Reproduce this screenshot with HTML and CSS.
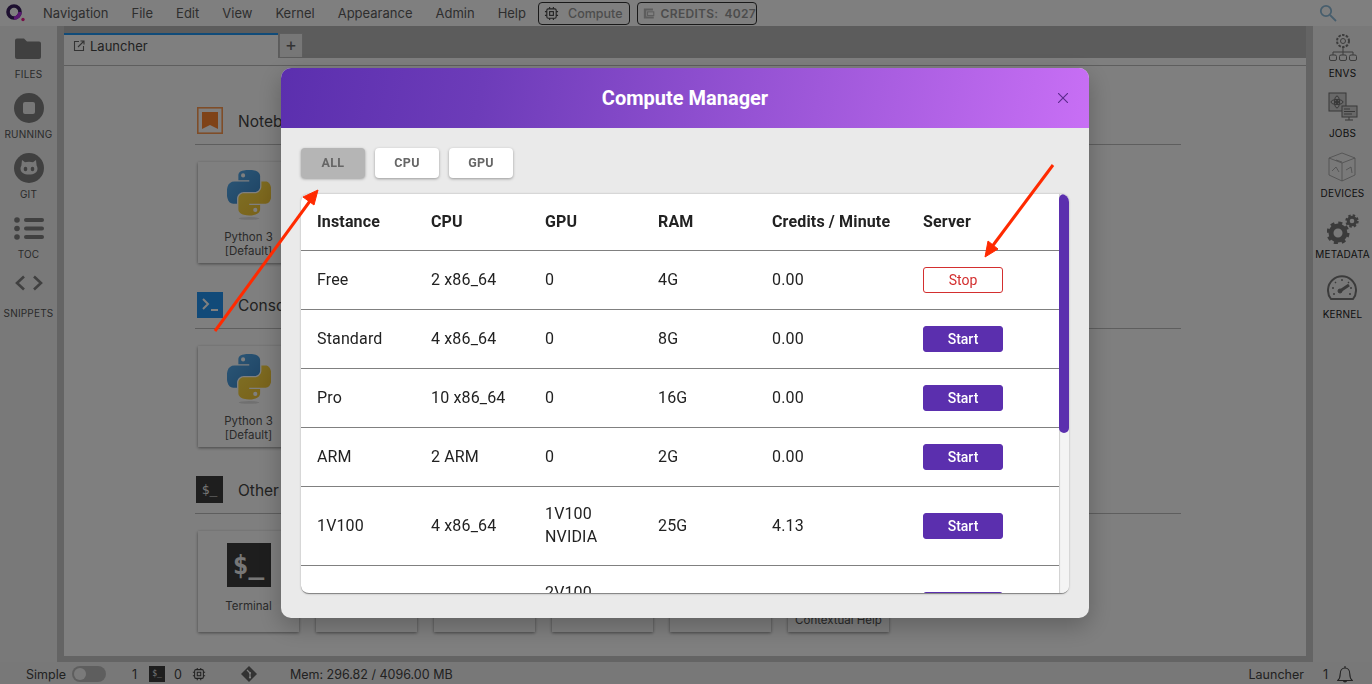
FILE: index.html
```html
<!DOCTYPE html>
<html lang="en">
<head>
    <meta charset="UTF-8">
    <title>Compute Manager</title>
    <link rel="stylesheet" href="styles.css">
</head>
<body>
    <svg class="defs" width="0" height="0">
        <defs>
            <linearGradient id="py-blue" x1="0" y1="0" x2="1" y2="1">
                <stop offset="0" stop-color="#5ab0f0"/>
                <stop offset="1" stop-color="#3a86c8"/>
            </linearGradient>
            <linearGradient id="py-yellow" x1="0" y1="0" x2="1" y2="1">
                <stop offset="0" stop-color="#ffe04a"/>
                <stop offset="1" stop-color="#f0c030"/>
            </linearGradient>
            <symbol id="python" viewBox="0 0 110 125">
                <path fill="url(#py-blue)" d="M54.900 0C50.300 0 45.900.4 42 1.100 30.500 3.100 28.400 7.400 28.400 15.200V25.500H55.600V29H18.200C10.300 29 3.400 33.700 1.200 42.800-1.300 53.200-1.400 59.700 1.200 70.600 3.100 78.700 7.800 84.400 15.700 84.400H25V72C25 63 32.800 55.100 42 55.100H69.200C76.800 55.100 82.800 48.900 82.800 41.300V15.200C82.800 7.800 76.600 2.300 69.200 1.100 64.500.3 59.600 0 54.900 0ZM40.200 8.300A5.100 5.100 0 1 1 40.200 18.600 5.100 5.100 0 0 1 40.200 8.300Z"/>
                <path fill="url(#py-yellow)" d="M86 29V41C86 50.300 78.100 58.200 69.200 58.200H42C34.500 58.200 28.400 64.600 28.400 72V98C28.400 105.400 34.800 109.800 42 111.900 50.600 114.400 58.900 114.900 69.200 111.900 76 109.900 82.800 105.900 82.800 98V87.700H55.600V84.200H96.400C104.300 84.200 107.300 78.700 110 70.600 112.800 62.200 112.700 54.200 110 43.400 108 35.600 104.400 29 96.400 29ZM70.700 94.600A5.100 5.100 0 1 1 70.700 104.900 5.100 5.100 0 0 1 70.700 94.600Z"/>
                <ellipse cx="55" cy="121" rx="26" ry="3.500" fill="#000" opacity=".12"/>
            </symbol>
        </defs>
    </svg>

    <header class="topbar">
        <svg class="logo" viewBox="0 0 20 20" width="20" height="20">
            <circle cx="8" cy="9" r="6" fill="none" stroke="#3a2060" stroke-width="3.600"/>
            <path d="M14 9a6 6 0 0 1-6 6" fill="none" stroke="#b030e0" stroke-width="3.600"/>
            <circle cx="17" cy="16.500" r="1.700" fill="#f02090"/>
        </svg>
        <nav class="menu">
            <span>Navigation</span><span>File</span><span>Edit</span><span>View</span><span>Kernel</span><span>Appearance</span><span>Admin</span><span>Help</span>
        </nav>
        <div class="pill pill-compute">
            <svg viewBox="0 0 16 16" width="15" height="15" class="chip">
                <rect x="3" y="3" width="10" height="10" rx="1.500"/><rect x="6" y="6" width="4" height="4"/>
                <path d="M6 1v2M10 1v2M6 13v2M10 13v2M1 6h2M1 10h2M13 6h2M13 10h2"/>
            </svg>
            <span>Compute</span>
        </div>
        <div class="pill pill-credits">
            <svg viewBox="0 0 14 14" width="13" height="13"><path d="M1 1h11v2.500H4v7h9V13H1z" fill="#bbb"/><rect x="5.500" y="5" width="7.500" height="4.500" fill="none" stroke="#bbb" stroke-width="1.300"/></svg>
            <span>CREDITS:</span><span>4027</span>
        </div>
        <svg class="search" viewBox="0 0 18 18" width="18" height="18">
            <circle cx="7" cy="7" r="5.200"/><path d="M11 11l6 6"/>
        </svg>
    </header>

    <div class="middle">
        <aside class="sidebar">
            <div class="side-item side-files">
                <svg viewBox="0 0 26 21" width="26" height="21"><path d="M0 2.500A2 2 0 0 1 2 .5h7l3 3h12a2 2 0 0 1 2 2V19a2 2 0 0 1-2 2H2a2 2 0 0 1-2-2z" fill="#808080"/></svg>
                <span>FILES</span>
            </div>
            <div class="side-item">
                <svg viewBox="0 0 30 30" width="30" height="30"><circle cx="15" cy="15" r="15" fill="#808080"/><rect x="9" y="9" width="12" height="12" rx="2" fill="#eee"/></svg>
                <span>RUNNING</span>
            </div>
            <div class="side-item">
                <svg viewBox="0 0 30 30" width="30" height="30"><circle cx="15" cy="15" r="15" fill="#808080"/><path d="M8 7l3 2.200c2.500-.7 5.500-.7 8 0L22 7l.6 5.500c.6 1 .9 2 .9 3 0 4-3.500 6-8.500 6s-8.500-2-8.500-6c0-1 .3-2 .9-3z" fill="#eee"/><ellipse cx="11.500" cy="16" rx="1.800" ry="2.300" fill="#808080"/><ellipse cx="18.500" cy="16" rx="1.800" ry="2.300" fill="#808080"/></svg>
                <span>GIT</span>
            </div>
            <div class="side-item side-toc">
                <svg viewBox="0 0 30 23" width="30" height="23" fill="#808080"><circle cx="3" cy="3" r="2.800"/><circle cx="3" cy="11.500" r="2.800"/><circle cx="3" cy="20" r="2.800"/><rect x="10" y="1" width="20" height="4" rx="2"/><rect x="10" y="9.500" width="20" height="4" rx="2"/><rect x="10" y="18" width="20" height="4" rx="2"/></svg>
                <span>TOC</span>
            </div>
            <div class="side-item side-snippets">
                <svg viewBox="0 0 28 16" width="28" height="16" fill="none" stroke="#808080" stroke-width="2.600"><path d="M9 1.500L2 8l7 6.500M19 1.500L26 8l-7 6.500"/></svg>
                <span>SNIPPETS</span>
            </div>
        </aside>

        <main class="workspace">
            <div class="tabs">
                <div class="tab">
                    <svg viewBox="0 0 12 12" width="12" height="12" fill="none" stroke="#666" stroke-width="1.100"><path d="M6 1.500H1.500v9h9V6M5 7l5.500-5.500M7.500 1h3.500v3.500"/></svg>
                    <span>Launcher</span>
                </div>
                <div class="tab-add">+</div>
            </div>
            <div class="launcher">
                <section class="group group-first">
                    <div class="group-head">
                        <svg class="group-icon" viewBox="0 0 26 27" width="26" height="27"><rect x=".8" y=".8" width="24.400" height="25.400" fill="none" stroke="#ff9a50" stroke-width="1.600"/><path d="M5 5h16v17l-8-4-8 4z" fill="#ff8630"/></svg>
                        <h2>Notebook</h2>
                    </div>
                    <div class="cards">
                        <div class="card"><svg class="py" width="44" height="50"><use href="#python"/></svg><span>Python 3<br>[Default]</span></div>
                    </div>
                </section>
                <section class="group">
                    <div class="group-head">
                        <svg class="group-icon" viewBox="0 0 26 26" width="26" height="26"><rect width="26" height="26" fill="#2294f2"/><path d="M6 7l5 5-5 5" fill="none" stroke="#fff" stroke-width="2"/><path d="M14 18h7" stroke="#fff" stroke-width="2"/></svg>
                        <h2>Console</h2>
                    </div>
                    <div class="cards">
                        <div class="card"><svg class="py" width="44" height="50"><use href="#python"/></svg><span>Python 3<br>[Default]</span></div>
                    </div>
                </section>
                <section class="group">
                    <div class="group-head">
                        <div class="group-icon term-small">$_</div>
                        <h2>Other</h2>
                    </div>
                    <div class="cards">
                        <div class="card"><div class="term-big">$_</div><span>Terminal</span></div>
                        <div class="card"></div>
                        <div class="card"></div>
                        <div class="card"></div>
                        <div class="card"></div>
                        <div class="card card-help"><span>Show<br>Contextual Help</span></div>
                    </div>
                </section>
            </div>
        </main>

        <aside class="sidebar sidebar-right">
            <div class="side-item">
                <svg viewBox="0 0 30 30" width="30" height="30" fill="none" stroke="#787878" stroke-width="1">
                    <circle cx="15" cy="9" r="6" stroke-width="2" stroke-dasharray="2.500 1.300"/><circle cx="15" cy="9" r="2.500"/>
                    <path d="M15 15v4M5 23v-3h20v3M15 19v4"/>
                    <rect x="1.500" y="23" width="7" height="5.500" rx="1.500"/><rect x="11.500" y="23" width="7" height="5.500" rx="1.500"/><rect x="21.500" y="23" width="7" height="5.500" rx="1.500"/>
                </svg>
                <span>ENVS</span>
            </div>
            <div class="side-item">
                <svg viewBox="0 0 30 30" width="30" height="30" fill="none" stroke="#707070" stroke-width="1">
                    <rect x="1" y="1" width="17" height="18" fill="#d0d0d0"/>
                    <circle cx="9" cy="10" r="1.500" fill="#707070"/><ellipse cx="9" cy="10" rx="6" ry="2.500"/><ellipse cx="9" cy="10" rx="2.500" ry="6"/>
                    <rect x="14" y="14" width="15" height="11" fill="#d0d0d0"/>
                    <path d="M16 17h6M16 19.500h11M16 22h8M21 25v3M17 28h8"/>
                </svg>
                <span>JOBS</span>
            </div>
            <div class="side-item">
                <svg viewBox="0 0 30 30" width="30" height="30" fill="none" stroke="#9a9a9a" stroke-width=".8">
                    <path d="M15 1l13 5v17l-13 6-13-6V6zM2 6l13 5 13-5M15 11v18M5 19l4-4 3 5M19 18l5-3 1 6M9 8l6 2"/>
                </svg>
                <span>DEVICES</span>
            </div>
            <div class="side-item side-meta">
                <svg viewBox="0 0 32 30" width="32" height="30">
                    <circle cx="11" cy="19" r="7" fill="none" stroke="#777" stroke-width="5"/>
                    <circle cx="11" cy="19" r="10" fill="none" stroke="#777" stroke-width="3" stroke-dasharray="4 3.850"/>
                    <circle cx="25" cy="7" r="3.800" fill="none" stroke="#777" stroke-width="3"/>
                    <circle cx="25" cy="7" r="5.600" fill="none" stroke="#777" stroke-width="2.200" stroke-dasharray="2.400 2"/>
                </svg>
                <span>METADATA</span>
            </div>
            <div class="side-item side-kernel">
                <svg viewBox="0 0 30 26" width="30" height="26" fill="none" stroke="#777">
                    <path d="M4 25A14 14 0 1 1 26 25z" stroke-width="2"/>
                    <path d="M13 17l9-6" stroke-width="3"/><circle cx="13" cy="17" r="2" fill="#777"/>
                    <path d="M15 5v2M8 8l1 1M22 8l-1 1M5 14h2M23 14h2M6 20h2M22 20h2" stroke-width="1.400"/>
                </svg>
                <span>KERNEL</span>
            </div>
        </aside>
    </div>

    <footer class="statusbar">
        <span class="status-simple">Simple</span>
        <span class="toggle"></span>
        <span class="status-count">1</span>
        <span class="term-tiny">$_</span>
        <span class="status-zero">0</span>
        <svg class="chip chip-status" viewBox="0 0 16 16" width="14" height="14">
            <rect x="3" y="3" width="10" height="10" rx="1.500"/><rect x="6" y="6" width="4" height="4"/>
            <path d="M6 1v2M10 1v2M6 13v2M10 13v2M1 6h2M1 10h2M13 6h2M13 10h2"/>
        </svg>
        <svg class="git-diamond" viewBox="0 0 16 16" width="16" height="16"><path d="M8 0l8 8-8 8-8-8z" fill="#666"/><path d="M6 4l3 3v5" stroke="#fff" stroke-width="1.200" fill="none"/><circle cx="9" cy="7" r="1.100" fill="#fff"/><circle cx="9" cy="11.500" r="1.100" fill="#fff"/></svg>
        <span class="status-mem">Mem: 296.82 / 4096.00 MB</span>
        <span class="status-right">Launcher</span>
        <span class="status-one">1</span>
        <svg class="bell" viewBox="0 0 16 18" width="16" height="18" fill="none" stroke="#444" stroke-width="1.100"><path d="M.8 15.500c1.700-1.500 2.400-3 2.400-6.500 0-3.500 2-6 4.800-6s4.800 2.500 4.800 6c0 3.500.7 5 2.400 6.500z"/><path d="M8 1v2"/><path d="M6.500 15.500a1.500 1.500 0 0 0 3 0" fill="#444"/></svg>
    </footer>

    <div class="overlay">
        <div class="modal">
            <div class="modal-head">
                <h1>Compute Manager</h1>
                <svg class="modal-close" viewBox="0 0 10 10" width="10" height="10"><path d="M0 0l10 10M10 0L0 10" stroke="#5b2a8c" stroke-width="1.100"/></svg>
            </div>
            <div class="modal-body">
                <div class="filters">
                    <button class="filter filter-on">ALL</button>
                    <button class="filter">CPU</button>
                    <button class="filter">GPU</button>
                </div>
                <div class="table-wrap">
                    <div class="table-scroll">
                        <table class="instances">
                            <thead>
                                <tr><th>Instance</th><th>CPU</th><th class="col-gpu">GPU</th><th>RAM</th><th class="col-credits">Credits / Minute</th><th class="col-server">Server</th></tr>
                            </thead>
                            <tbody>
                                <tr><td>Free</td><td>2 x86_64</td><td>0</td><td>4G</td><td>0.00</td><td><button class="srv srv-stop">Stop</button></td></tr>
                                <tr><td>Standard</td><td>4 x86_64</td><td>0</td><td>8G</td><td>0.00</td><td><button class="srv">Start</button></td></tr>
                                <tr><td>Pro</td><td>10 x86_64</td><td>0</td><td>16G</td><td>0.00</td><td><button class="srv">Start</button></td></tr>
                                <tr><td>ARM</td><td>2 ARM</td><td>0</td><td>2G</td><td>0.00</td><td><button class="srv">Start</button></td></tr>
                                <tr><td>1V100</td><td>4 x86_64</td><td class="gpu-wrap">1V100<br>NVIDIA</td><td>25G</td><td>4.13</td><td><button class="srv">Start</button></td></tr>
                                <tr><td></td><td></td><td class="gpu-wrap">2V100<br>NVIDIA</td><td></td><td></td><td><button class="srv"></button></td></tr>
                            </tbody>
                        </table>
                    </div>
                    <div class="scrolltrack"><div class="scrollthumb"></div></div>
                </div>
            </div>
        </div>
    </div>

    <svg class="arrows" viewBox="0 0 1372 684" width="1372" height="684">
        <g stroke="#ff2a00" stroke-width="3" fill="#ff2a00">
            <path d="M215 331L310 201"/>
            <path d="M318 190L303 197 314 205z" stroke-width="1"/>
            <path d="M1053 165L991 248"/>
            <path d="M985 257L988 241 998 249z" stroke-width="1"/>
        </g>
    </svg>
</body>
</html>
```

FILE: styles.css
```css
* { box-sizing: border-box; }
html, body { margin: 0; height: 100%; overflow: hidden; }
body { display: flex; flex-direction: column; width: 1372px; height: 684px; font-family: Inter, "Noto Sans", sans-serif; color: #444; background: #c8c8c8; }
.defs { position: absolute; }

/* top menu */
.topbar { height: 26px; flex: none; display: flex; align-items: center; background: #fff; padding-left: 6px; }
.logo { flex: none; }
.menu { display: flex; gap: 23px; margin-left: 17px; font-size: 13px; color: #5c5c5c; width: 495px; }
.pill { height: 23px; border: 1px solid #333; border-radius: 4px; display: flex; align-items: center; font-size: 12.500px; font-weight: 600; color: #999; }
.pill-compute { width: 92px; padding-left: 5px; gap: 9px; font-weight: 500; }
.pill-credits { width: 120px; margin-left: 7px; padding-left: 5px; gap: 6px; font-size: 12px; letter-spacing: .3px; }
.chip { fill: none; stroke: #444; stroke-width: 1.200; flex: none; }
.search { margin-left: 562px; fill: none; stroke: #8fbddb; stroke-width: 1.800; }

/* middle area */
.middle { flex: 1; display: flex; min-height: 0; }
.sidebar { width: 57px; flex: none; background: #f2f2f2; display: flex; flex-direction: column; align-items: center; padding-top: 12px; color: #555; }
.sidebar-right { width: 59px; padding-top: 6px; color: #222; }
.side-item { height: 60px; display: flex; flex-direction: column; align-items: center; gap: 5px; }
.side-item span { font-size: 10px; line-height: 12px; letter-spacing: .2px; white-space: nowrap; }
.side-files { gap: 9px; height: 55px; }
.side-toc { padding-top: 4px; gap: 8px; }
.side-snippets { padding-top: 2px; gap: 16px; }
.side-meta { padding-top: 2px; gap: 4px; }
.side-kernel { padding-top: 2px; gap: 8px; }

.workspace { flex: 1; margin: 0 7px 6px; display: flex; flex-direction: column; min-width: 0; }
.tabs { height: 32px; flex: none; display: flex; padding-top: 7px; background: #b8b8b8; gap: 1px; }
.tab { width: 214px; height: 32px; background: #fff; border-top: 2px solid #2196f3; display: flex; align-items: center; gap: 5px; padding: 0 9px 8px; font-size: 13px; color: #444; position: relative; z-index: 1; }
.tab-add { width: 24px; height: 24px; background: #eee; border: 1px solid #bdbdbd; border-bottom: 0; text-align: center; font-size: 18px; line-height: 22px; color: #666; }
.launcher { flex: 1; background: #fff; padding-left: 131px; position: relative; }
.launcher::before { content: ""; position: absolute; left: 0; right: 0; top: 7px; height: 1px; background: #bdbdbd; }

.group { width: 986px; height: 185px; padding-top: 48px; }
.group-first { height: 184px; }
.group-head { display: flex; align-items: center; gap: 15px; height: 39px; border-bottom: 1px solid #bdbdbd; padding: 0 0 9px 2px; }
.group-head h2 { margin: 0; padding-top: 2px; font-size: 15.500px; font-weight: 400; color: #444; }
.group-icon { flex: none; }
.term-small { width: 27px; height: 27px; background: #3c3c3c; color: #eee; font-family: "DejaVu Sans Mono", monospace; font-size: 13px; line-height: 27px; text-align: center; margin-left: -1px; }
.cards { display: flex; gap: 17px; padding: 17px 0 0 3px; }
.card { width: 101px; height: 101px; flex: none; background: #fff; box-shadow: 0 1px 3px rgba(0,0,0,.45); display: flex; flex-direction: column; align-items: center; padding-top: 8px; font-size: 11.500px; line-height: 14px; text-align: center; color: #555; }
.py { margin-bottom: 10px; }
.term-big { width: 44px; height: 44px; background: #3c3c3c; color: #eee; font-family: "DejaVu Sans Mono", monospace; font-weight: 700; font-size: 26px; line-height: 44px; margin: 4px 0 12px; }
.card-help { padding-top: 68px; }

/* status bar */
.statusbar { height: 22px; flex: none; background: #f0f0f0; display: flex; align-items: center; font-size: 12.500px; color: #444; padding: 2px 0 0 26px; }
.toggle { width: 34px; height: 16px; border-radius: 8px; background: #bdbdbd; margin-left: 6px; position: relative; }
.toggle::after { content: ""; position: absolute; left: 2px; top: 2px; width: 12px; height: 12px; border-radius: 50%; background: #f5f5f5; }
.status-count { margin-left: 26px; }
.term-tiny { width: 16px; height: 16px; background: #3c3c3c; color: #eee; font-family: "DejaVu Sans Mono", monospace; font-size: 8px; line-height: 16px; text-align: center; margin-left: 12px; }
.status-zero { margin-left: 9px; }
.chip-status { margin-left: 10px; }
.git-diamond { margin-left: 35px; }
.status-mem { margin-left: 33px; }
.status-right { margin-left: auto; }
.status-one { margin-left: 19px; }
.bell { margin-left: 9px; margin-right: 19px; }

/* dim layer and dialog */
.overlay { position: fixed; inset: 0; z-index: 10; background: rgba(0,0,0,.5); padding: 68px 0 0 281px; }
.modal { width: 808px; height: 550px; background: #eaeaea; border-radius: 10px; overflow: hidden; box-shadow: 0 8px 24px rgba(0,0,0,.25); font-family: Roboto, sans-serif; }
.modal-head { height: 60px; display: flex; align-items: center; justify-content: center; position: relative; background: linear-gradient(100deg, #5b2fae 0%, #6d3cb9 25%, #c86ff5 100%); }
.modal-head h1 { margin: 0; font-size: 20px; font-weight: 700; color: #fff; }
.modal-close { position: absolute; right: 21px; top: 25px; }
.modal-body { padding: 20px; }
.filters { display: flex; gap: 10px; margin-bottom: 16px; }
.filter { width: 64px; height: 30px; border: 0; border-radius: 4px; padding: 0 0 2px; background: #fff; color: #666; font: 700 12.500px Roboto, sans-serif; letter-spacing: .3px; box-shadow: 0 1px 3px rgba(0,0,0,.35); }
.filter-on { background: #b5b5b5; }
.table-wrap { height: 400px; display: flex; background: #fff; border-radius: 8px; border-bottom: 1px solid #888; overflow: hidden; width: 768px; box-shadow: 0 0 2px rgba(0,0,0,.3); }
.table-scroll { flex: 1; overflow: hidden; }
.instances { border-collapse: collapse; width: 758px; table-layout: fixed; font-size: 16px; color: #222; }
.instances th, .instances td { text-align: left; padding: 16px 0 16px 16px; letter-spacing: .15px; border-bottom: 1px solid #808080; }
.instances th { height: 56px; font-weight: 700; width: 114px; padding-top: 0; padding-bottom: 0; }
.instances th.col-gpu { width: 113px; }
.instances th.col-credits { width: 151px; }
.instances th.col-server { width: 152px; }
.instances td { line-height: 23px; }
.instances td.gpu-wrap { padding-top: 15px; padding-bottom: 17px; }
.srv { display: block; width: 80px; height: 26px; border: 1px solid #5b2fae; border-radius: 3px; background: #5b2fae; color: #fff; font: 500 14px Roboto, sans-serif; }
.srv-stop { background: #fff; border-color: #d32f2f; color: #d32f2f; font-weight: 400; }
.scrolltrack { width: 10px; flex: none; background: #f4f4f4; box-shadow: inset 1px 0 1px rgba(0,0,0,.15); }
.scrollthumb { height: 239px; background: #5b2fae; border-radius: 5px; }

.arrows { position: fixed; left: 0; top: 0; z-index: 11; pointer-events: none; }
```
